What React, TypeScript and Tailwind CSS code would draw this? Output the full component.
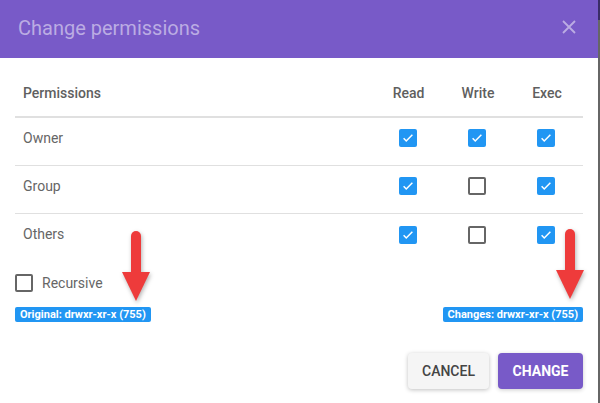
import React, { useState } from 'react';

type Perm = { name: string; read: boolean; write: boolean; exec: boolean };

const initialPerms: Perm[] = [
  { name: 'Owner', read: true, write: true, exec: true },
  { name: 'Group', read: true, write: false, exec: true },
  { name: 'Others', read: true, write: false, exec: true },
];

const Checkbox: React.FC<{ checked: boolean; onChange?: () => void }> = ({ checked, onChange }) => (
  <button
    onClick={onChange}
    className={`w-[18px] h-[18px] rounded-[2px] flex items-center justify-center ${
      checked ? 'bg-[#2196f3]' : 'border-2 border-[#666666] bg-white'
    }`}
  >
    {checked && (
      <svg width="14" height="14" viewBox="0 0 24 24" fill="none">
        <path d="M4.5 12.5l4.5 4.5 10.5-10.5" stroke="white" strokeWidth="2.6" />
      </svg>
    )}
  </button>
);

const RedArrow: React.FC<{ className: string }> = ({ className }) => (
  <svg className={className} width="32" height="74" viewBox="0 0 32 74" style={{ filter: 'drop-shadow(1px 2px 2px rgba(0,0,0,0.3))' }}>
    <line x1="15" y1="6" x2="15" y2="44" stroke="#ee3b3b" strokeWidth="10" strokeLinecap="round" />
    <polygon points="1,42 29,42 15,71" fill="#ee3b3b" />
  </svg>
);

export default function App() {
  const [perms, setPerms] = useState(initialPerms);
  const [recursive, setRecursive] = useState(false);

  const toggle = (idx: number, key: 'read' | 'write' | 'exec') => {
    setPerms(perms.map((p, i) => (i === idx ? { ...p, [key]: !p[key] } : p)));
  };

  return (
    <div className="w-[600px] h-[403px] flex bg-[#666666] overflow-hidden" style={{ fontFamily: 'Roboto, "Liberation Sans", sans-serif' }}>
      <div className="relative w-[598px] h-full bg-white flex flex-col">
        {/* Header */}
        <div className="h-[58px] shrink-0 bg-[#785ac8] flex items-center justify-between pl-[18px] pr-[21px]">
          <h1 className="text-[20px] text-[#bbace3] leading-none pb-[2px]">Change permissions</h1>
          <svg width="16" height="16" viewBox="0 0 16 16" className="mt-[-4px]">
            <path d="M2 2l12 12M14 2L2 14" stroke="#bbace3" strokeWidth="1.8" />
          </svg>
        </div>

        <div className="px-[15px] pt-[12px] flex flex-col">
          {/* Table */}
          <div className="grid grid-cols-[1fr_69px_69px_69px] pr-[3px] h-[48px] items-center border-b-2 border-[#e0e0e0] text-[14px] font-medium text-[#5f5f5f]">
            <div className="pl-[8px]">Permissions</div>
            <div className="text-center pl-[2px]">Read</div>
            <div className="text-center pl-[3px]">Write</div>
            <div className="text-center pl-[3px]">Exec</div>
          </div>
          {perms.map((p, idx) => (
            <div
              key={p.name}
              className={`grid grid-cols-[1fr_69px_69px_69px] pr-[3px] h-[48px] items-center pb-[7px] text-[14px] text-[#666666] ${
                idx < perms.length - 1 ? 'border-b border-[#e0e0e0]' : ''
              }`}
            >
              <div className="pl-[8px]">{p.name}</div>
              <div className="flex justify-center"><Checkbox checked={p.read} onChange={() => toggle(idx, 'read')} /></div>
              <div className="flex justify-center"><Checkbox checked={p.write} onChange={() => toggle(idx, 'write')} /></div>
              <div className="flex justify-center"><Checkbox checked={p.exec} onChange={() => toggle(idx, 'exec')} /></div>
            </div>
          ))}

          {/* Recursive */}
          <div className="flex items-center gap-[9px] mt-[12px] h-[18px]">
            <Checkbox checked={recursive} onChange={() => setRecursive(!recursive)} />
            <span className="text-[14px] text-[#666666]">Recursive</span>
          </div>

          {/* Mode badges */}
          <div className="flex justify-between mt-[15px]">
            <span className="h-[15px] px-[5px] rounded-[2px] bg-[#2196f3] text-white text-[11px] font-bold leading-[15px]">
              Original: drwxr-xr-x (755)
            </span>
            <span className="h-[15px] px-[5px] rounded-[2px] bg-[#2196f3] text-white text-[11px] font-bold leading-[15px]">
              Changes: drwxr-xr-x (755)
            </span>
          </div>

          {/* Actions */}
          <div className="flex justify-end gap-[9px] mt-[31px]">
            <button className="w-[81px] h-[36px] rounded-[4px] bg-[#f5f5f5] text-[14px] font-medium text-[#444444] shadow-[0_1px_4px_rgba(0,0,0,0.25)]">
              CANCEL
            </button>
            <button className="w-[85px] h-[36px] rounded-[4px] bg-[#785ac8] text-[14px] font-bold text-white shadow-[0_1px_4px_rgba(0,0,0,0.2)]">
              CHANGE
            </button>
          </div>
        </div>

        {/* Annotation arrows */}
        <RedArrow className="absolute left-[121px] top-[230px]" />
        <RedArrow className="absolute left-[555px] top-[228px]" />
      </div>
      <div className="w-[2px] flex flex-col">
        <div className="h-[20px] bg-[#3a2d66]" />
        <div className="flex-1 bg-[#666666]" />
      </div>
    </div>
  );
}
